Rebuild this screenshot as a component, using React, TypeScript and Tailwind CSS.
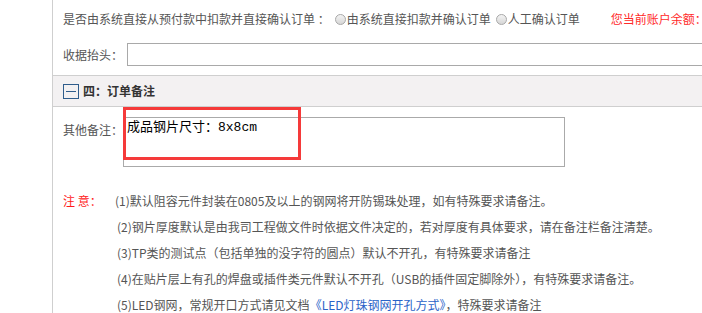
import React from 'react';

const Radio = () => (
  <span className="inline-block w-[11px] h-[11px] rounded-full border border-[#a8a8a8] bg-gradient-to-b from-[#f4f4f4] to-[#d6d6d6] shrink-0" />
);

const notes = [
  '(2)钢片厚度默认是由我司工程做文件时依据文件决定的，若对厚度有具体要求，请在备注栏备注清楚。',
  '(3)TP类的测试点（包括单独的没字符的圆点）默认不开孔，有特殊要求请备注',
  '(4)在贴片层上有孔的焊盘或插件类元件默认不开孔（USB的插件固定脚除外），有特殊要求请备注。',
];

const App = () => {
  return (
    <div className="w-[702px] h-[313px] overflow-hidden bg-white flex font-['Noto_Sans_CJK_SC',sans-serif] text-[12px] text-[#555]">
      <div className="w-[52px] shrink-0" />
      <div className="flex-1 border-l border-[#cfcfcf] min-w-0">
        {/* 扣款方式 */}
        <div className="h-[38px] flex items-center pl-[10px] whitespace-nowrap">
          <span>是否由系统直接从预付款中扣款并直接确认订单 ：</span>
          <label className="flex items-center ml-[5px]">
            <Radio />
            <span className="ml-[1px]">由系统直接扣款并确认订单</span>
          </label>
          <label className="flex items-center ml-[5px]">
            <Radio />
            <span className="ml-[1px]">人工确认订单</span>
          </label>
          <span className="ml-[31px] text-[#ff2a2a]">您当前账户余额：</span>
        </div>

        {/* 收据抬头 */}
        <div className="h-[38px] flex items-start pt-[5px] pl-[10px] border-b border-[#cfcfcf]">
          <span className="h-[23px] leading-[23px] whitespace-nowrap">收据抬头：</span>
          <div className="ml-[4px] h-[23px] flex-1 border border-r-0 border-[#a9a9a9]" />
        </div>

        {/* 四：订单备注 */}
        <div className="h-[31px] flex items-center pl-[10px] bg-[#f3f1f2] border-b border-[#cfcfcf]">
          <span className="w-[16px] h-[15px] border border-[#2f5d8c] flex items-center justify-center">
            <span className="w-[10px] h-[1px] bg-[#2f5d8c]" />
          </span>
          <span className="ml-[4px] font-bold text-[#333]">四：订单备注</span>
        </div>

        <div className="relative pt-[10px] pl-[10px] flex">
          <span className="w-[60px] mt-[3px] leading-[20px] whitespace-nowrap">其他备注：</span>
          <div className="w-[442px] h-[50px] border border-[#aaaaaa] pl-[3px] pt-[2px] text-[13px] leading-[16px] text-black font-['Liberation_Mono','Noto_Sans_CJK_SC',monospace] whitespace-nowrap">
            成品钢片尺寸：8x8cm
          </div>
          {/* 标注框 */}
          <div className="absolute left-[70px] top-0 w-[178px] h-[53px] border-[3px] border-[#f53a3a]" />
        </div>

        {/* 注意事项 */}
        <div className="mt-[21px] pl-[10px] leading-[26px] whitespace-nowrap">
          <div className="flex">
            <span className="w-[52px] text-[#ff1a1a]">注&nbsp;意：</span>
            <span>(1)默认阻容元件封装在0805及以上的钢网将开防锡珠处理，如有特殊要求请备注。</span>
          </div>
          {notes.map((n) => (
            <div key={n} className="pl-[54px]">{n}</div>
          ))}
          <div className="pl-[54px]">
            (5)LED钢网，常规开口方式请见文档<span className="text-[#2a63c8]">《LED灯珠钢网开孔方式》</span>，特殊要求请备注
          </div>
        </div>
      </div>
    </div>
  );
};

export default App;
